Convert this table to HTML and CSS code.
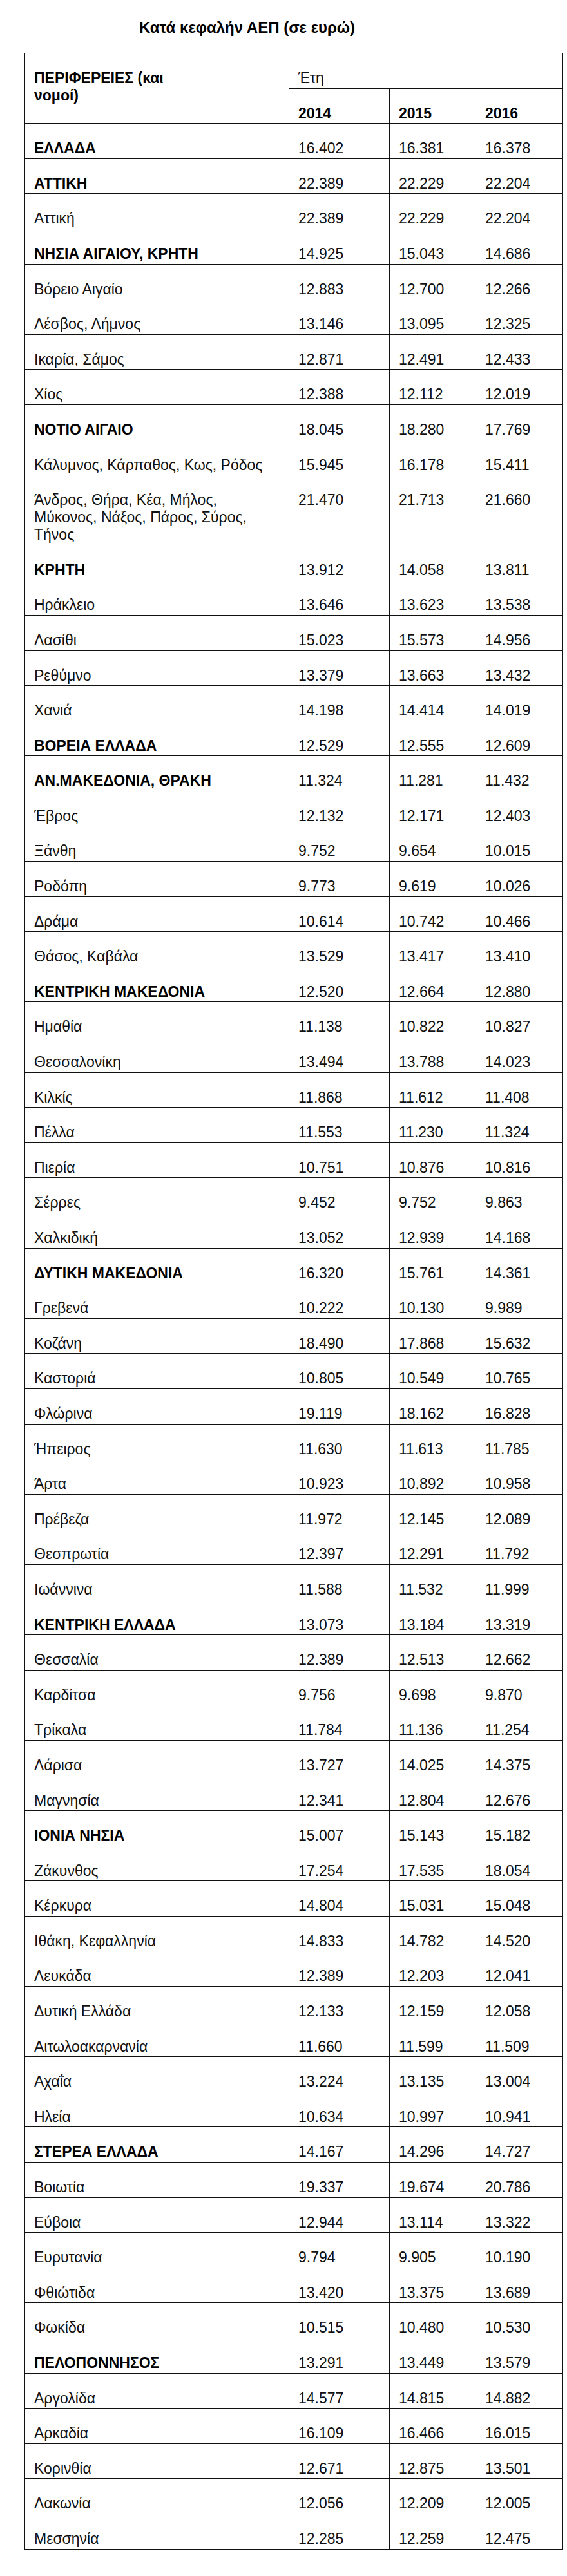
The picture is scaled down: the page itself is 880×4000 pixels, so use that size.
FILE: index.html
```html
<!DOCTYPE html>
<html lang="el">
<head>
<meta charset="utf-8">
<title>Κατά κεφαλήν ΑΕΠ</title>
<link rel="stylesheet" href="styles.css">
</head>
<body>
<div class="page">
  <div class="title">Κατά κεφαλήν ΑΕΠ (σε ευρώ)</div>
  <table class="gdp">
    <colgroup>
      <col class="c-name">
      <col class="c-y1">
      <col class="c-y2">
      <col class="c-y3">
    </colgroup>
    <thead>
      <tr>
        <th rowspan="2" class="b">ΠΕΡΙΦΕΡΕΙΕΣ (και<br>νομοί)</th>
        <th colspan="3" class="n">Έτη</th>
      </tr>
      <tr>
        <th class="b">2014</th>
        <th class="b">2015</th>
        <th class="b">2016</th>
      </tr>
    </thead>
    <tbody>
      <tr><td class="b">ΕΛΛΑΔΑ</td><td>16.402</td><td>16.381</td><td>16.378</td></tr>
      <tr><td class="b">ΑΤΤΙΚΗ</td><td>22.389</td><td>22.229</td><td>22.204</td></tr>
      <tr><td>Αττική</td><td>22.389</td><td>22.229</td><td>22.204</td></tr>
      <tr><td class="b">ΝΗΣΙΑ ΑΙΓΑΙΟΥ, ΚΡΗΤΗ</td><td>14.925</td><td>15.043</td><td>14.686</td></tr>
      <tr><td>Βόρειο Αιγαίο</td><td>12.883</td><td>12.700</td><td>12.266</td></tr>
      <tr><td>Λέσβος, Λήμνος</td><td>13.146</td><td>13.095</td><td>12.325</td></tr>
      <tr><td>Ικαρία, Σάμος</td><td>12.871</td><td>12.491</td><td>12.433</td></tr>
      <tr><td>Χίος</td><td>12.388</td><td>12.112</td><td>12.019</td></tr>
      <tr><td class="b">ΝΟΤΙΟ ΑΙΓΑΙΟ</td><td>18.045</td><td>18.280</td><td>17.769</td></tr>
      <tr><td>Κάλυμνος, Κάρπαθος, Κως, Ρόδος</td><td>15.945</td><td>16.178</td><td>15.411</td></tr>
      <tr class="tall"><td>Άνδρος, Θήρα, Κέα, Μήλος,<br>Μύκονος, Νάξος, Πάρος, Σύρος,<br>Τήνος</td><td>21.470</td><td>21.713</td><td>21.660</td></tr>
      <tr><td class="b">ΚΡΗΤΗ</td><td>13.912</td><td>14.058</td><td>13.811</td></tr>
      <tr><td>Ηράκλειο</td><td>13.646</td><td>13.623</td><td>13.538</td></tr>
      <tr><td>Λασίθι</td><td>15.023</td><td>15.573</td><td>14.956</td></tr>
      <tr><td>Ρεθύμνο</td><td>13.379</td><td>13.663</td><td>13.432</td></tr>
      <tr><td>Χανιά</td><td>14.198</td><td>14.414</td><td>14.019</td></tr>
      <tr><td class="b">ΒΟΡΕΙΑ ΕΛΛΑΔΑ</td><td>12.529</td><td>12.555</td><td>12.609</td></tr>
      <tr><td class="b">ΑΝ.ΜΑΚΕΔΟΝΙΑ, ΘΡΑΚΗ</td><td>11.324</td><td>11.281</td><td>11.432</td></tr>
      <tr><td>Έβρος</td><td>12.132</td><td>12.171</td><td>12.403</td></tr>
      <tr><td>Ξάνθη</td><td>9.752</td><td>9.654</td><td>10.015</td></tr>
      <tr><td>Ροδόπη</td><td>9.773</td><td>9.619</td><td>10.026</td></tr>
      <tr><td>Δράμα</td><td>10.614</td><td>10.742</td><td>10.466</td></tr>
      <tr><td>Θάσος, Καβάλα</td><td>13.529</td><td>13.417</td><td>13.410</td></tr>
      <tr><td class="b">ΚΕΝΤΡΙΚΗ ΜΑΚΕΔΟΝΙΑ</td><td>12.520</td><td>12.664</td><td>12.880</td></tr>
      <tr><td>Ημαθία</td><td>11.138</td><td>10.822</td><td>10.827</td></tr>
      <tr><td>Θεσσαλονίκη</td><td>13.494</td><td>13.788</td><td>14.023</td></tr>
      <tr><td>Κιλκίς</td><td>11.868</td><td>11.612</td><td>11.408</td></tr>
      <tr><td>Πέλλα</td><td>11.553</td><td>11.230</td><td>11.324</td></tr>
      <tr><td>Πιερία</td><td>10.751</td><td>10.876</td><td>10.816</td></tr>
      <tr><td>Σέρρες</td><td>9.452</td><td>9.752</td><td>9.863</td></tr>
      <tr><td>Χαλκιδική</td><td>13.052</td><td>12.939</td><td>14.168</td></tr>
      <tr><td class="b">ΔΥΤΙΚΗ ΜΑΚΕΔΟΝΙΑ</td><td>16.320</td><td>15.761</td><td>14.361</td></tr>
      <tr><td>Γρεβενά</td><td>10.222</td><td>10.130</td><td>9.989</td></tr>
      <tr><td>Κοζάνη</td><td>18.490</td><td>17.868</td><td>15.632</td></tr>
      <tr><td>Καστοριά</td><td>10.805</td><td>10.549</td><td>10.765</td></tr>
      <tr><td>Φλώρινα</td><td>19.119</td><td>18.162</td><td>16.828</td></tr>
      <tr><td>Ήπειρος</td><td>11.630</td><td>11.613</td><td>11.785</td></tr>
      <tr><td>Άρτα</td><td>10.923</td><td>10.892</td><td>10.958</td></tr>
      <tr><td>Πρέβεζα</td><td>11.972</td><td>12.145</td><td>12.089</td></tr>
      <tr><td>Θεσπρωτία</td><td>12.397</td><td>12.291</td><td>11.792</td></tr>
      <tr><td>Ιωάννινα</td><td>11.588</td><td>11.532</td><td>11.999</td></tr>
      <tr><td class="b">ΚΕΝΤΡΙΚΗ ΕΛΛΑΔΑ</td><td>13.073</td><td>13.184</td><td>13.319</td></tr>
      <tr><td>Θεσσαλία</td><td>12.389</td><td>12.513</td><td>12.662</td></tr>
      <tr><td>Καρδίτσα</td><td>9.756</td><td>9.698</td><td>9.870</td></tr>
      <tr><td>Τρίκαλα</td><td>11.784</td><td>11.136</td><td>11.254</td></tr>
      <tr><td>Λάρισα</td><td>13.727</td><td>14.025</td><td>14.375</td></tr>
      <tr><td>Μαγνησία</td><td>12.341</td><td>12.804</td><td>12.676</td></tr>
      <tr><td class="b">ΙΟΝΙΑ ΝΗΣΙΑ</td><td>15.007</td><td>15.143</td><td>15.182</td></tr>
      <tr><td>Ζάκυνθος</td><td>17.254</td><td>17.535</td><td>18.054</td></tr>
      <tr><td>Κέρκυρα</td><td>14.804</td><td>15.031</td><td>15.048</td></tr>
      <tr><td>Ιθάκη, Κεφαλληνία</td><td>14.833</td><td>14.782</td><td>14.520</td></tr>
      <tr><td>Λευκάδα</td><td>12.389</td><td>12.203</td><td>12.041</td></tr>
      <tr><td>Δυτική Ελλάδα</td><td>12.133</td><td>12.159</td><td>12.058</td></tr>
      <tr><td>Αιτωλοακαρνανία</td><td>11.660</td><td>11.599</td><td>11.509</td></tr>
      <tr><td>Αχαΐα</td><td>13.224</td><td>13.135</td><td>13.004</td></tr>
      <tr><td>Ηλεία</td><td>10.634</td><td>10.997</td><td>10.941</td></tr>
      <tr><td class="b">ΣΤΕΡΕΑ ΕΛΛΑΔΑ</td><td>14.167</td><td>14.296</td><td>14.727</td></tr>
      <tr><td>Βοιωτία</td><td>19.337</td><td>19.674</td><td>20.786</td></tr>
      <tr><td>Εύβοια</td><td>12.944</td><td>13.114</td><td>13.322</td></tr>
      <tr><td>Ευρυτανία</td><td>9.794</td><td>9.905</td><td>10.190</td></tr>
      <tr><td>Φθιώτιδα</td><td>13.420</td><td>13.375</td><td>13.689</td></tr>
      <tr><td>Φωκίδα</td><td>10.515</td><td>10.480</td><td>10.530</td></tr>
      <tr><td class="b">ΠΕΛΟΠΟΝΝΗΣΟΣ</td><td>13.291</td><td>13.449</td><td>13.579</td></tr>
      <tr><td>Αργολίδα</td><td>14.577</td><td>14.815</td><td>14.882</td></tr>
      <tr><td>Αρκαδία</td><td>16.109</td><td>16.466</td><td>16.015</td></tr>
      <tr><td>Κορινθία</td><td>12.671</td><td>12.875</td><td>13.501</td></tr>
      <tr><td>Λακωνία</td><td>12.056</td><td>12.209</td><td>12.005</td></tr>
      <tr><td>Μεσσηνία</td><td>12.285</td><td>12.259</td><td>12.475</td></tr>
    </tbody>
  </table>
</div>
</body>
</html>
```

FILE: styles.css
```css
html, body {
  margin: 0;
  padding: 0;
  background: #ffffff;
}

body {
  font-family: "Liberation Sans", Arial, sans-serif;
  color: #111111;
}

.page {
  padding: 29px 0 40px 38px;
}

.title {
  font-size: 24px;
  line-height: 28px;
  font-weight: bold;
  color: #000000;
  padding-left: 178px;
  margin: 0 0 25px 0;
}

.gdp {
  border-collapse: collapse;
  table-layout: fixed;
  width: 835px;
  font-size: 23px;
  line-height: 27px;
}

.c-name { width: 410px; }
.c-y1 { width: 156px; }
.c-y2 { width: 134px; }
.c-y3 { width: 135px; }

.gdp th,
.gdp td {
  border: 1px solid #111111;
  padding: 25px 6px 1.6px 14px;
  text-align: left;
  vertical-align: top;
  white-space: nowrap;
}

.gdp th {
  font-weight: normal;
}

.gdp .b {
  font-weight: bold;
  color: #000000;
}

.gdp .n {
  font-weight: normal;
}
```
